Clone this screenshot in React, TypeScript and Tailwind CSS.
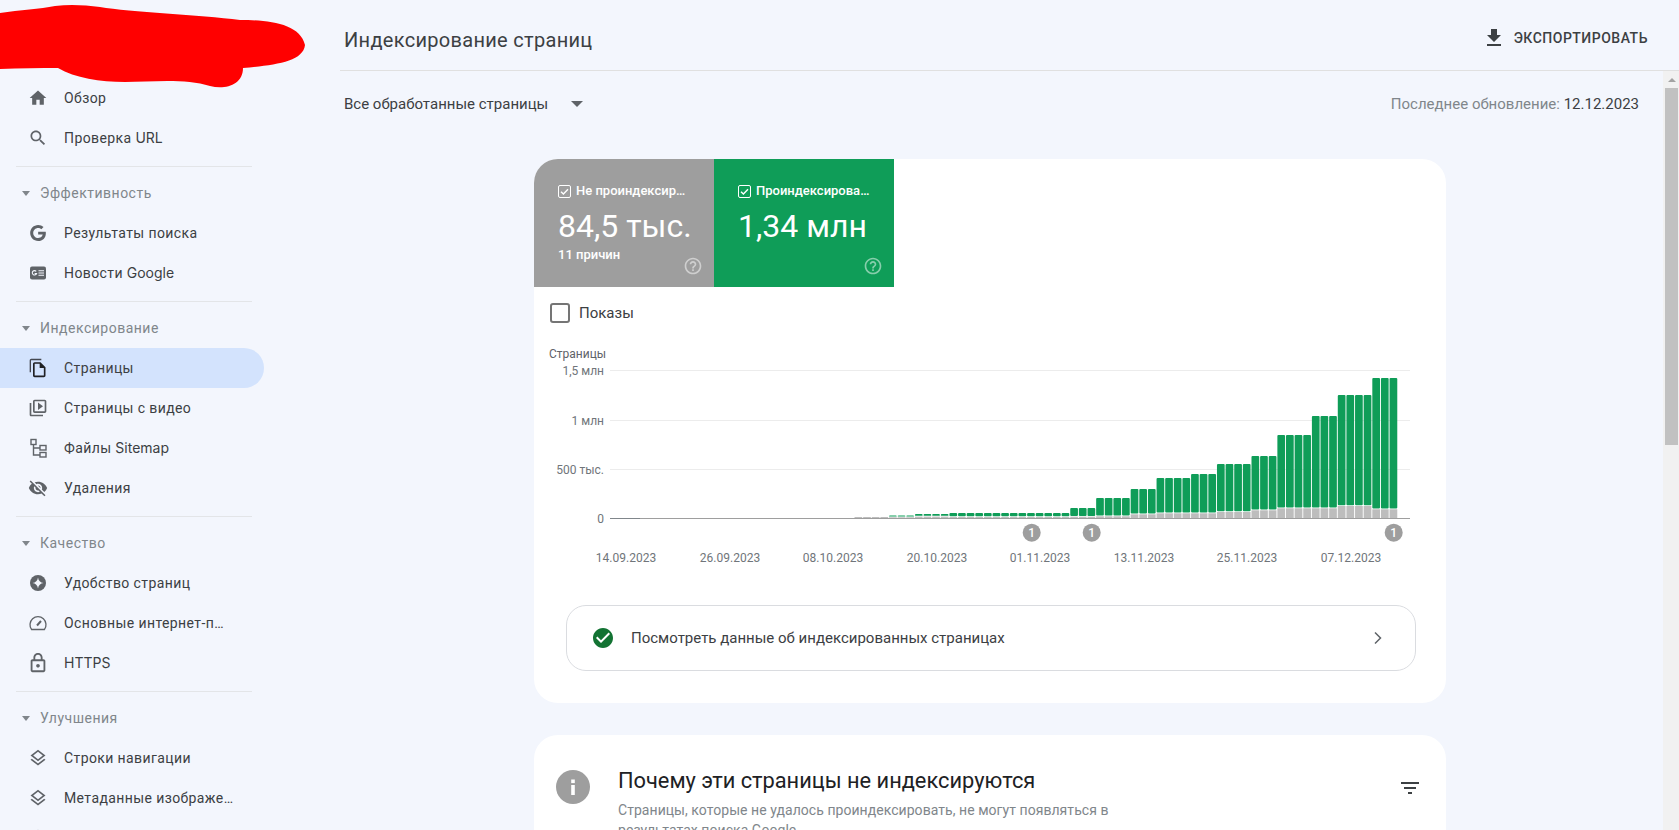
import React from "react";

const P = ({ d, className = "w-5 h-5" }: { d: string; className?: string }) => (
  <svg viewBox="0 0 24 24" className={`fill-current ${className}`}>
    <path d={d} />
  </svg>
);

const icons: Record<string, React.ReactNode> = {
  home: <P d="M10 20v-6h4v6h5v-8h3L12 3 2 12h3v8z" />,
  search: (
    <P d="M15.5 14h-.79l-.28-.27C15.41 12.59 16 11.11 16 9.5 16 5.91 13.09 3 9.5 3S3 5.91 3 9.5 5.91 16 9.5 16c1.61 0 3.09-.59 4.23-1.57l.27.28v.79l5 4.99L20.49 19l-4.99-5zm-6 0C7.01 14 5 11.99 5 9.5S7.01 5 9.5 5 14 7.01 14 9.5 11.99 14 9.5 14z" />
  ),
  g: (
    <svg viewBox="0 0 24 24" className="w-4 h-4 fill-current">
      <path d="M12.24 10.285V14.4h6.806c-.275 1.765-2.056 5.174-6.806 5.174-4.095 0-7.439-3.389-7.439-7.574s3.345-7.574 7.439-7.574c2.33 0 3.891.989 4.785 1.849l3.254-3.138C18.189 1.186 15.479 0 12.24 0c-6.635 0-12 5.365-12 12s5.365 12 12 12c6.926 0 11.52-4.869 11.52-11.726 0-.788-.085-1.39-.189-1.989H12.24z" />
    </svg>
  ),
  news: (
    <svg viewBox="0 0 24 24" className="w-6 h-6">
      <rect x="4" y="5.5" width="16" height="13" rx="2" fill="currentColor" />
      <path d="M10.2 10.4a2.2 2.2 0 1 0 .4 2.1h-2" fill="none" stroke="#f3f6fd" strokeWidth="1.1" />
      <path d="M12.5 9.8h5.5M12.5 12h5.5M12.5 14.2h5.5" stroke="#f3f6fd" strokeWidth="1.1" />
    </svg>
  ),
  pages: (
    <svg viewBox="0 0 24 24" className="w-5 h-5 fill-current">
      <path d="M16 1H4c-1.1 0-2 .9-2 2v14h1.6V2.6H16V1z" opacity="0.8" />
      <path d="M15 5H8c-1.1 0-1.99.9-1.99 2L6 21c0 1.1.89 2 1.99 2H19c1.1 0 2-.9 2-2V11l-6-6zM8 21V7h6v5h5v9H8z" />
      <path d="M14.5 6l6 6h-6z" />
    </svg>
  ),
  video: (
    <P d="M4 6H2v14c0 1.1.9 2 2 2h14v-2H4V6zm16-4H8c-1.1 0-2 .9-2 2v12c0 1.1.9 2 2 2h12c1.1 0 2-.9 2-2V4c0-1.1-.9-2-2-2zm0 14H8V4h12v12zM12 5.5v9l6-4.5z" />
  ),
  sitemap: (
    <svg viewBox="0 0 24 24" className="w-6 h-6 fill-none stroke-current" strokeWidth="1.4">
      <rect x="5" y="3.5" width="5" height="5" />
      <rect x="14" y="9.5" width="6" height="4.5" />
      <rect x="14" y="16.5" width="6" height="4.5" />
      <path d="M7.5 8.5V19H14M7.5 12H14" />
    </svg>
  ),
  off: (
    <P d="M12 7c2.76 0 5 2.24 5 5 0 .65-.13 1.26-.36 1.83l2.92 2.92c1.51-1.26 2.7-2.89 3.43-4.75-1.73-4.39-6-7.5-11-7.5-1.4 0-2.74.25-3.98.7l2.16 2.16C10.74 7.13 11.35 7 12 7zM2 4.27l2.28 2.28.46.46C3.08 8.3 1.78 10.02 1 12c1.73 4.39 6 7.5 11 7.5 1.55 0 3.03-.3 4.38-.84l.42.42L19.73 22 21 20.73 3.27 3 2 4.27zM7.53 9.8l1.55 1.55c-.05.21-.08.43-.08.65 0 1.66 1.34 3 3 3 .22 0 .44-.03.65-.08l1.55 1.55c-.67.33-1.41.53-2.2.53-2.76 0-5-2.24-5-5 0-.79.2-1.53.53-2.2zm4.31-.78l3.15 3.15.02-.16c0-1.66-1.34-3-3-3l-.17.01z" />
  ),
  exp: (
    <svg viewBox="0 0 24 24" className="w-6 h-6">
      <circle cx="12" cy="12" r="8" fill="currentColor" />
      <path d="M12 6.5c.5 3.2 2.3 5 5.5 5.5-3.2.5-5 2.3-5.5 5.5-.5-3.2-2.3-5-5.5-5.5 3.2-.5 5-2.3 5.5-5.5z" fill="#f3f6fd" />
    </svg>
  ),
  speed: (
    <svg viewBox="0 0 24 24" className="w-6 h-6 fill-none stroke-current" strokeWidth="1.3">
      <path d="M5.6 18.5a8 8 0 1 1 12.8 0z" />
      <path d="M11 14.5l4-4.5" strokeWidth="2" />
    </svg>
  ),
  lock: (
    <P
      className="w-[22px] h-[22px]"
      d="M18 8h-1V6c0-2.76-2.24-5-5-5S7 3.24 7 6v2H6c-1.1 0-2 .9-2 2v10c0 1.1.9 2 2 2h12c1.1 0 2-.9 2-2V10c0-1.1-.9-2-2-2zM9 6c0-1.66 1.34-3 3-3s3 1.34 3 3v2H9V6zm9 14H6V10h12v10zm-6-3c1.1 0 2-.9 2-2s-.9-2-2-2-2 .9-2 2 .9 2 2 2z"
    />
  ),
  layers: (
    <P d="M11.99 18.54l-7.37-5.73L3 14.07l9 7 9-7-1.63-1.27-7.38 5.74zM12 16l7.36-5.73L21 9l-9-7-9 7 1.63 1.27L12 16zm0-11.47L17.74 9 12 13.47 6.26 9 12 4.53z" />
  ),
};

const L = ({ children }: { children: React.ReactNode }) => (
  <span className="font-['Inter'] tracking-normal">{children}</span>
);

const Item = ({
  icon,
  children,
  active,
  textW = "w-[174px]",
}: {
  icon: string;
  children?: React.ReactNode;
  active?: boolean;
  textW?: string;
}) => (
  <div
    className={`h-10 flex items-center pl-[26px] gap-[14px] w-[264px] rounded-r-full ${
      active ? "bg-[#d3e3fd] text-[#202124]" : "text-[#5f6368]"
    }`}
  >
    <span className="w-6 h-6 shrink-0 flex items-center justify-center">{icons[icon]}</span>
    <span className={`${textW} truncate text-sm tracking-[0.4px] text-[#3c4043]`}>{children}</span>
  </div>
);

const Section = ({ title, children }: { title: string; children: React.ReactNode }) => (
  <>
    <div className="mt-2 ml-4 w-[236px] h-px bg-[#e3e5e8]" />
    <div className="mt-[6px] h-10 flex items-center text-sm tracking-[0.5px] text-[#80868b]">
      <span className="ml-[22px] mr-[10px] w-0 h-0 border-x-[4.5px] border-x-transparent border-t-[5px] border-t-[#80868b]" />
      {title}
    </div>
    {children}
  </>
);

const Sidebar = () => (
  <aside className="w-[340px] shrink-0 pt-[78px] h-full overflow-hidden">
    <Item icon="home">Обзор</Item>
    <Item icon="search">
      Проверка <L>URL</L>
    </Item>
    <Section title="Эффективность">
      <Item icon="g">Результаты поиска</Item>
      <Item icon="news">
        Новости <L>Google</L>
      </Item>
    </Section>
    <Section title="Индексирование">
      <Item icon="pages" active>
        Страницы
      </Item>
      <Item icon="video">Страницы с видео</Item>
      <Item icon="sitemap">
        Файлы <L>Sitemap</L>
      </Item>
      <Item icon="off">Удаления</Item>
    </Section>
    <Section title="Качество">
      <Item icon="exp">Удобство страниц</Item>
      <Item icon="speed" textW="w-[166px]">
        Основные интернет-показатели
      </Item>
      <Item icon="lock">
        <L>HTTPS</L>
      </Item>
    </Section>
    <Section title="Улучшения">
      <Item icon="layers">Строки навигации</Item>
      <Item icon="layers">Метаданные изображений</Item>
      <Item icon="layers" />
    </Section>
  </aside>
);

const Tile = ({ bg, title, value, sub }: { bg: string; title: string; value: string; sub?: string }) => (
  <div className={`relative w-[180px] h-[128px] pl-6 pt-[26px] text-white ${bg}`}>
    <div className="flex items-center gap-[5px] h-[13px]">
      <svg viewBox="0 0 13 13" className="w-[13px] h-[13px] shrink-0 fill-none stroke-white">
        <rect x="0.5" y="0.5" width="12" height="12" rx="1.5" />
        <path d="M3 6.7l2.4 2.4L10 4.3" strokeWidth="1.4" />
      </svg>
      <span className="w-[114px] truncate text-[13px] font-medium leading-4 -mt-[2px]">{title}</span>
    </div>
    <div className="mt-[8px] text-[32px] leading-10 font-normal whitespace-nowrap">{value}</div>
    {sub && <div className="mt-[1px] text-[13px] leading-4 font-medium">{sub}</div>}
    <svg viewBox="0 0 24 24" className="absolute right-[11px] bottom-[11px] w-5 h-5 fill-white/50">
      <path d="M11 18h2v-2h-2v2zm1-16C6.48 2 2 6.48 2 12s4.48 10 10 10 10-4.48 10-10S17.52 2 12 2zm0 18c-4.41 0-8-3.59-8-8s3.59-8 8-8 8 3.59 8 8-3.59 8-8 8zm0-14c-2.21 0-4 1.79-4 4h2c0-1.1.9-2 2-2s2 .9 2 2c0 2-3 1.75-3 5h2c0-2.25 3-2.5 3-5 0-2.21-1.79-4-4-4z" />
    </svg>
  </div>
);

const groups: [number, number, number][] = [
  [4, 0, 517],
  [3, 515.5, 517.3],
  [4, 514, 516.6],
  [14, 513, 517],
  [3, 508, 516.7],
  [4, 498, 516.3],
  [3, 489, 514.3],
  [4, 478, 513.3],
  [3, 474, 513.3],
  [4, 464, 512],
  [3, 456, 510.3],
  [4, 435, 508.3],
  [3, 416, 508.3],
  [4, 395, 506],
  [3, 378, 509.3],
];

const bars = (() => {
  const out: { x: number; top: number; gray: number }[] = [];
  let x = 1398.2 - 63 * 8.63;
  for (const [n, top, gray] of groups) {
    for (let i = 0; i < n; i++) {
      out.push({ x, top, gray });
      x += 8.63;
    }
  }
  return out;
})();

const dates: [number, string][] = [
  [626, "14.09.2023"],
  [730, "26.09.2023"],
  [833, "08.10.2023"],
  [937, "20.10.2023"],
  [1040, "01.11.2023"],
  [1144, "13.11.2023"],
  [1247, "25.11.2023"],
  [1351, "07.12.2023"],
];

const font = "Roboto, sans-serif";

const Chart = () => (
  <svg viewBox="534 339 912 236" className="block w-[912px] h-[236px]">
    <text x="549" y="358" fontSize="12" fontFamily={font} fill="#5f6368">Страницы</text>
    {[
      [370.5, "1,5 млн"],
      [420.5, "1 млн"],
      [469.5, "500 тыс."],
    ].map(([y, l]) => (
      <g key={l as string}>
        <line x1="610" x2="1410" y1={y as number} y2={y as number} stroke="#ececec" />
        <text x="604" y={(y as number) + 4.5} fontSize="12" textAnchor="end" fontFamily={font} fill="#70757a">{l}</text>
      </g>
    ))}
    <text x="604" y="523" fontSize="12" textAnchor="end" fontFamily={font} fill="#70757a">0</text>
    {bars.map((b, i) => (
      <g key={i}>
        {b.top > 0 && (
          <rect x={b.x} y={b.top} width="7.7" height={Math.max(b.gray - 0.8 - b.top, 0.8)} rx="1" fill="#0f9d58" />
        )}
        <rect x={b.x} y={b.gray} width="7.7" height={518 - b.gray} fill="#bdbdbd" />
      </g>
    ))}
    <line x1="610" x2="1410" y1="518.5" y2="518.5" stroke="#9e9e9e" />
    <line x1="610" x2="640" y1="518.5" y2="518.5" stroke="#80868b" />
    {[1031.7, 1091.7, 1393.7].map((x) => (
      <g key={x}>
        <circle cx={x} cy="532.7" r="9" fill="#9e9e9e" />
        <text x={x} y="537" fontSize="12" textAnchor="middle" fontFamily={font} fontWeight="500" fill="#fff">1</text>
      </g>
    ))}
    {dates.map(([x, l]) => (
      <text key={l} x={x} y="562" fontSize="12" textAnchor="middle" fontFamily={font} fill="#70757a">{l}</text>
    ))}
  </svg>
);

const Blob = () => (
  <svg viewBox="0 0 310 95" className="absolute left-0 top-0 w-[310px] h-[95px] fill-[#ff0000]">
    <path d="M0 13C20 10 40 9 55 6C70 4 85 5 100 7C130 12 200 15 240 20C270 20 300 24 305 45C303 62 275 65 243 68C243 85 225 90 210 86C185 78 150 82 125 82C100 82 75 78 58 68C40 68 20 68 0 69Z" />
  </svg>
);

const Scrollbar = () => (
  <div className="w-4 shrink-0 bg-[#f1f1f1] flex flex-col pl-[2px]">
    <div className="h-[17px] w-[13px] flex items-center justify-center">
      <span className="w-0 h-0 border-x-[4px] border-x-transparent border-b-[4px] border-b-[#a3a3a3]" />
    </div>
    <div className="w-[13px] h-[357px] bg-[#c1c1c1]" />
  </div>
);

export default function App() {
  return (
    <div
      className="relative h-screen w-full flex overflow-hidden bg-[#f3f6fd] text-[#3c4043]"
      style={{ fontFamily: '"Roboto", sans-serif' }}
    >
      <Sidebar />
      <Blob />
      <main className="flex-1 min-w-0 flex flex-col h-full">
        <header className="h-[71px] shrink-0 border-b border-[#e0e0e0] flex items-center justify-between pl-[4px] pr-[31px]">
          <h1 className="pt-[10px] text-xl font-normal tracking-[0.3px] text-[#3c4043]">Индексирование страниц</h1>
          <div className="pt-[6px] flex items-center gap-[8px] text-sm font-medium tracking-[0.5px]">
            <svg viewBox="0 0 24 24" className="w-6 h-6 fill-[#3c4043]">
              <path d="M19 9h-4V3H9v6H5l7 7 7-7zM5 18v2h14v-2H5z" />
            </svg>
            ЭКСПОРТИРОВАТЬ
          </div>
        </header>
        <div className="flex-1 min-h-0 flex">
          <div className="flex-1 min-w-0 overflow-hidden">
            <div className="h-[88px] flex justify-between pl-[4px] pr-[24px] pt-[23px] text-[15px] leading-5">
              <div className="flex items-center h-5 text-[#3c4043]">
                Все обработанные страницы
                <span className="ml-[23px] w-0 h-0 border-x-[6.5px] border-x-transparent border-t-[6.5px] border-t-[#5f6368]" />
              </div>
              <div className="text-[#80868b] h-5">
                Последнее обновление: <span className="text-[#3c4043]">12.12.2023</span>
              </div>
            </div>
            <section className="ml-[194px] w-[912px] bg-white rounded-3xl overflow-hidden pb-8">
              <div className="flex">
                <Tile bg="bg-[#9e9e9e]" title="Не проиндексированные" value="84,5 тыс." sub="11 причин" />
                <Tile bg="bg-[#0f9d58]" title="Проиндексированные" value="1,34 млн" />
              </div>
              <div className="h-[52px] pl-4 flex items-center gap-[9px] text-[15px]">
                <span className="w-5 h-5 rounded-[3px] border-2 border-[#757575]" />
                Показы
              </div>
              <Chart />
              <div className="mt-[30px] ml-8 mr-[30px] h-[66px] rounded-[20px] border border-[#dadce0] flex items-center pl-6 pr-[25px] text-[15px]">
                <svg viewBox="0 0 24 24" className="w-6 h-6 fill-[#137333] mr-4">
                  <path d="M12 2C6.48 2 2 6.48 2 12s4.48 10 10 10 10-4.48 10-10S17.52 2 12 2zm-2 15l-5-5 1.41-1.41L10 14.17l7.59-7.59L19 8l-9 9z" />
                </svg>
                <span className="flex-1">Посмотреть данные об индексированных страницах</span>
                <svg viewBox="0 0 24 24" className="w-6 h-6 fill-none stroke-[#5f6368]" strokeWidth="1.5">
                  <path d="M9 6.5l5.5 5.5L9 17.5" />
                </svg>
              </div>
            </section>
            <section className="relative mt-8 ml-[194px] w-[912px] h-[400px] bg-white rounded-3xl pt-[33px] pl-[22px] flex">
              <svg viewBox="0 0 34 34" className="w-[34px] h-[34px] mt-[2px] shrink-0">
                <circle cx="17" cy="17" r="17" fill="#9e9e9e" />
                <rect x="15.2" y="15" width="3.6" height="10" fill="#fff" />
                <rect x="15.2" y="9.5" width="3.6" height="3.6" fill="#fff" />
              </svg>
              <div className="ml-[28px] w-[530px]">
                <h2 className="-mt-px text-[21.8px] leading-7 font-normal text-[#202124]">Почему эти страницы не индексируются</h2>
                <p className="mt-[5px] text-sm leading-5 tracking-[0.05px] text-[#80868b]">
                  Страницы, которые не удалось проиндексировать, не могут появляться в результатах поиска Google.
                </p>
              </div>
              <svg viewBox="0 0 24 24" className="absolute left-[864px] top-[41px] w-6 h-6 fill-[#3c4043]">
                <path d="M10 18h4v-2h-4v2zM3 6v2h18V6H3zm3 7h12v-2H6v2z" />
              </svg>
            </section>
          </div>
          <Scrollbar />
        </div>
      </main>
    </div>
  );
}
